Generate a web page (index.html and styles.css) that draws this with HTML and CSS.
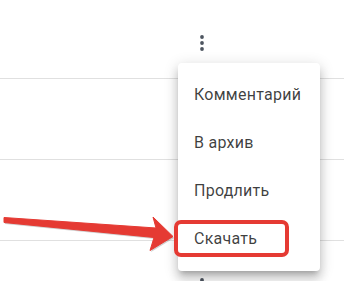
FILE: index.html
```
<!DOCTYPE html>
<html lang="ru">
<head>
<meta charset="utf-8">
<link rel="stylesheet" href="styles.css">
</head>
<body>
<div class="list">
  <div class="row"><span class="more"><svg width="24" height="24" viewBox="0 0 24 24"><circle cx="12" cy="6" r="1.9"/><circle cx="12" cy="12" r="1.9"/><circle cx="12" cy="18" r="1.9"/></svg></span></div>
  <div class="row"><span class="more"><svg width="24" height="24" viewBox="0 0 24 24"><circle cx="12" cy="6" r="1.9"/><circle cx="12" cy="12" r="1.9"/><circle cx="12" cy="18" r="1.9"/></svg></span></div>
  <div class="row"><span class="more"><svg width="24" height="24" viewBox="0 0 24 24"><circle cx="12" cy="6" r="1.9"/><circle cx="12" cy="12" r="1.9"/><circle cx="12" cy="18" r="1.9"/></svg></span></div>
  <div class="row row-last"><span class="more"><svg width="24" height="24" viewBox="0 0 24 24"><circle cx="12" cy="6" r="1.9"/><circle cx="12" cy="12" r="1.9"/><circle cx="12" cy="18" r="1.9"/></svg></span></div>
</div>
<ul class="menu">
  <li class="item">Комментарий</li>
  <li class="item">В архив</li>
  <li class="item">Продлить</li>
  <li class="item">Скачать</li>
</ul>
<div class="highlight"></div>
<svg class="arrow" width="180" height="60" viewBox="0 0 180 60">
  <polygon class="arrow-shadow" points="5,19 157,29 154,19 174,38 151,52 155,39 5,24" />
  <polygon class="arrow-body" points="4,17.5 156,28 153,17 173,36.5 150,50.5 154,37.5 4,22.5" stroke-linejoin="round" />
</svg>
</body>
</html>
```
FILE: styles.css
```
html, body {
  margin: 0;
  padding: 0;
  background: #fff;
  width: 344px;
  height: 281px;
  overflow: hidden;
  position: relative;
  font-family: Roboto, "Noto Sans", sans-serif;
}
.list {
  margin-top: -2px;
}
.row {
  height: 80px;
  border-bottom: 1px solid #e0e0e0;
  display: grid;
  grid-template-columns: 1fr 24px 130px;
  align-items: start;
}
.row-last {
  height: 42px;
  border-bottom: 0;
  overflow: hidden;
}
.more {
  grid-column: 2;
  margin-top: 33px;
  height: 24px;
}
.more svg {
  display: block;
  fill: #4d5560;
}
.menu {
  position: absolute;
  left: 178px;
  top: 63px;
  width: 142px;
  margin: 0;
  padding: 8px 0;
  list-style: none;
  background: #fff;
  border-radius: 4px;
  box-shadow: 0 5px 5px -3px rgba(0,0,0,.2), 0 8px 10px 1px rgba(0,0,0,.14), 0 3px 14px 2px rgba(0,0,0,.12);
  box-sizing: border-box;
}
.item {
  height: 48px;
  line-height: 48px;
  padding: 0 16px;
  font-size: 16px;
  letter-spacing: 0.25px;
  color: rgba(0,0,0,.76);
  white-space: nowrap;
}
.highlight {
  position: absolute;
  left: 174px;
  top: 220px;
  width: 115px;
  height: 37px;
  box-sizing: border-box;
  border: 4px solid #e53a33;
  border-radius: 7px;
}
.arrow {
  position: absolute;
  left: 0;
  top: 200px;
}
.arrow-body {
  fill: #e53a33;
  stroke: #e53a33;
  stroke-width: 1;
}
.arrow-shadow {
  fill: rgba(0,0,0,.18);
}
```
